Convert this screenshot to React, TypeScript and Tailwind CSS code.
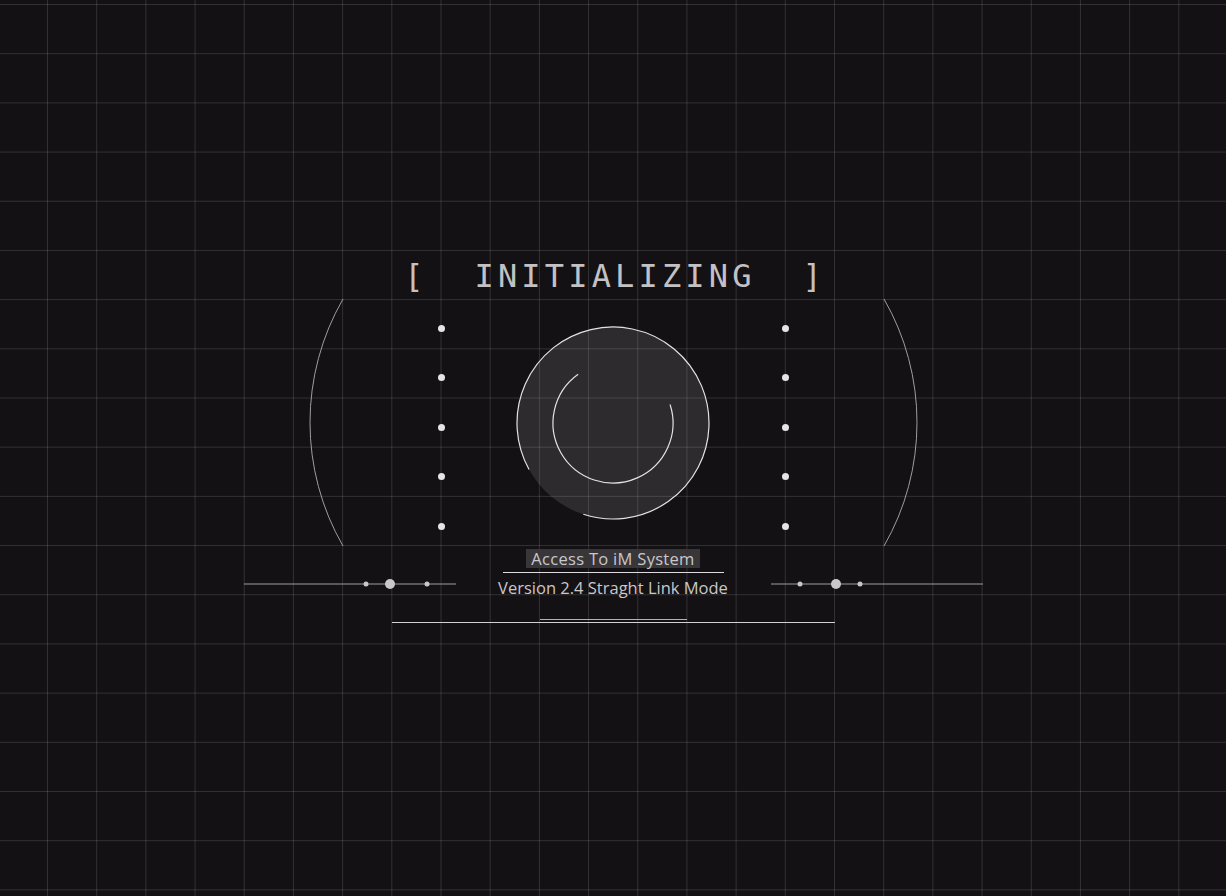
const Dots = () => (
  <div className="mt-[26.5px] flex flex-col gap-[42.5px]">
    {[0, 1, 2, 3, 4].map((i) => (
      <div key={i} className="h-[7px] w-[7px] rounded-full bg-[#e6e4e7]" />
    ))}
  </div>
);

const SideArc = ({ side }: { side: "left" | "right" }) => (
  <svg width="36" height="250" viewBox="0 0 36 250" fill="none">
    {side === "left" ? (
      <path d="M35 1 A247.6 247.6 0 0 0 35 248" stroke="#9f9da0" strokeWidth="1" />
    ) : (
      <path d="M1 1 A247.6 247.6 0 0 1 1 248" stroke="#9f9da0" strokeWidth="1" />
    )}
  </svg>
);

const Loader = () => (
  <svg width="196" height="196" viewBox="0 0 196 196" fill="none" className="mt-[27px]">
    <circle cx="98" cy="98" r="96" fill="rgba(255,255,255,0.11)" />
    {/* outer ring with a gap at lower left */}
    <path d="M14.04 144.54 A96 96 0 1 1 68.33 189.3" stroke="#e4e2e5" strokeWidth="1.2" />
    {/* inner spinner arc */}
    <path d="M155.06 79.46 A60 60 0 1 1 63.16 49.15" stroke="#e4e2e5" strokeWidth="1.2" />
  </svg>
);

const Rail = ({ dots }: { dots: [number, number][] }) => (
  <svg width="214" height="12" viewBox="0 0 214 12" fill="none" className="mt-[30px]">
    <line x1="1" y1="6" x2="213" y2="6" stroke="#9f9da0" strokeWidth="1" />
    {dots.map(([cx, r]) => (
      <circle key={cx} cx={cx} cy="6" r={r} fill="#c9c7ca" />
    ))}
  </svg>
);

export default function App() {
  return (
    <div className="min-h-screen w-full bg-[#141114] bg-[linear-gradient(to_right,rgba(255,255,255,0.13)_1px,transparent_1px),linear-gradient(to_bottom,rgba(255,255,255,0.13)_1px,transparent_1px)] bg-[size:49.2px_49.2px] bg-[position:47px_4px]">
      <div className="flex flex-col items-center pt-[260px]">
        {/* Title */}
        <h1 className="whitespace-pre pl-[0.13em] font-['DejaVu_Sans_Mono',monospace] text-[32px] leading-8 tracking-[0.13em] text-[#c3c1c4]">
          {"[  INITIALIZING  ]"}
        </h1>

        {/* Ring area */}
        <div className="mt-[6px] flex items-start">
          <SideArc side="left" />
          <div className="ml-[94px] mr-[70px]">
            <Dots />
          </div>
          <Loader />
          <div className="ml-[71px] mr-[94px]">
            <Dots />
          </div>
          <SideArc side="right" />
        </div>

        {/* Caption */}
        <div className="flex items-start font-['Open_Sans',sans-serif] text-[#c9c7ca]">
          <Rail dots={[[123, 2.5], [147, 5], [184, 2.5]]} />
          <div className="flex w-[313px] flex-col items-center">
            <span className="mt-px bg-[#39363a] px-[5px] text-[16.5px] leading-[19px] tracking-[0.3px]">Access To iM System</span>
            <div className="mt-[4px] h-px w-[221px] bg-[#dddbde]" />
            <p className="mt-[5px] text-[16.5px] leading-5">Version 2.4 Straght Link Mode</p>
            <div className="mt-[21px] h-px w-[147px] bg-[#b3b1b4]" />
          </div>
          <Rail dots={[[30, 2.5], [66, 5], [90, 2.5]]} />
        </div>
        <div className="mt-[2px] h-px w-[443px] bg-[#d3d1d4]" />
      </div>
    </div>
  );
}
